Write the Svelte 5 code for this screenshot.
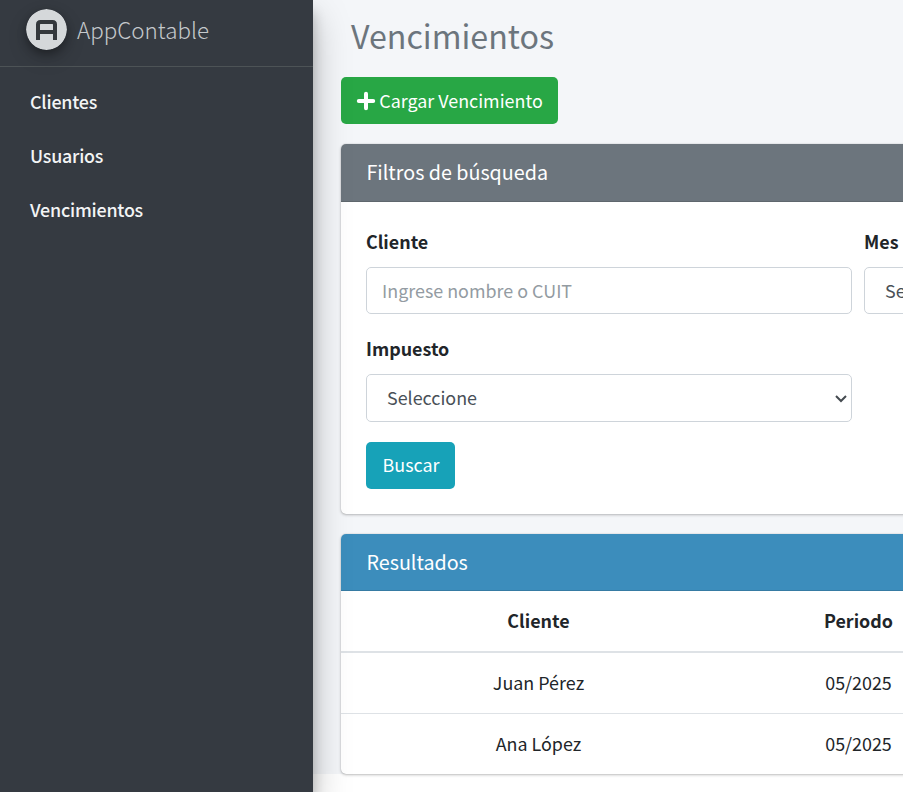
<script>
  const links = ['Clientes', 'Usuarios', 'Vencimientos'];
  const rows = [
    { cliente: 'Juan Pérez', periodo: '05/2025' },
    { cliente: 'Ana López', periodo: '05/2025' }
  ];
</script>

<div class="app">
  <aside class="sidebar">
    <a class="brand" href="#inicio">
      <svg class="logo" width="41" height="41" viewBox="0 0 41 41" aria-hidden="true">
        <circle cx="20.5" cy="20.5" r="20.4" fill="#d5d8da" />
        <path d="M12 31V15.500Q12 13 14.500 13H26.500Q29 13 29 15.500V31M12 23H29" fill="none" stroke="#34383c" stroke-width="4" />
      </svg>
      <span class="brand-text">AppContable</span>
    </a>
    <nav>
      {#each links as link}
        <a href="#{link}">{link}</a>
      {/each}
    </nav>
  </aside>

  <main>
    <h1>Vencimientos</h1>
    <button class="btn green" type="button">
      <svg width="20" height="20" viewBox="0 0 20 20" aria-hidden="true">
        <path d="M10 2.800V17.200M2.800 10H17.200" stroke="#fff" stroke-width="4" stroke-linecap="round" />
      </svg>
      <span>Cargar Vencimiento</span>
    </button>

    <section class="card filters">
      <h2>Filtros de búsqueda</h2>
      <form>
        <div class="grid">
          <div class="field">
            <label for="cliente">Cliente</label>
            <input id="cliente" type="text" placeholder="Ingrese nombre o CUIT" />
          </div>
          <div class="field">
            <label for="mes">Mes</label>
            <div class="select"><select id="mes"><option>Seleccione</option></select></div>
          </div>
          <div class="field">
            <label for="impuesto">Impuesto</label>
            <div class="select">
              <select id="impuesto"><option>Seleccione</option></select>
              <svg class="chevron" width="12" height="8" viewBox="0 0 12 8" aria-hidden="true">
                <path d="M1 1L6 6L11 1" fill="none" stroke="#454b50" stroke-width="2" />
              </svg>
            </div>
          </div>
        </div>
        <button class="btn teal" type="button">Buscar</button>
      </form>
    </section>

    <section class="card results">
      <h2>Resultados</h2>
      <table>
        <thead>
          <tr><th>Cliente</th><th>Periodo</th></tr>
        </thead>
        <tbody>
          {#each rows as row}
            <tr><td>{row.cliente}</td><td>{row.periodo}</td></tr>
          {/each}
        </tbody>
      </table>
    </section>
  </main>
</div>

<style>
  :global(body) { margin: 0; background: #fff; }
  .app {
    display: flex;
    width: 903px;
    height: 792px;
    overflow: hidden;
    font-family: 'Noto Sans CJK SC', 'Open Sans', sans-serif;
    font-size: 17.9px;
    line-height: 30px;
    color: #212529;
  }
  .app * { box-sizing: border-box; }
  .sidebar {
    position: relative;
    z-index: 1;
    flex: 0 0 313px;
    background: #353a41;
    box-shadow: 0 17px 35px rgba(0, 0, 0, 0.25), 0 12px 12px rgba(0, 0, 0, 0.22);
  }
  .brand {
    display: flex;
    align-items: center;
    gap: 10px;
    height: 67px;
    padding: 0 0 7px 26px;
    border-bottom: 1px solid #4d5356;
    text-decoration: none;
  }
  .logo {
    flex: none;
    border-radius: 50%;
    box-shadow: 0 4px 8px rgba(0, 0, 0, 0.3), 0 8px 20px rgba(0, 0, 0, 0.16);
  }
  .brand-text { padding-bottom: 2px; font-size: 22.4px; font-weight: 300; color: #c5c9cc; }
  nav { display: flex; flex-direction: column; gap: 24px; padding: 19px 0 0 30px; }
  nav a { font-weight: 500; letter-spacing: -0.22px; color: #f3f4f5; text-decoration: none; }
  main {
    flex: 0 0 1100px;
    height: 774px;
    padding-left: 28px;
    background: #f4f6f9;
  }
  h1 {
    margin: 0;
    padding: 12px 0 0 10px;
    height: 77px;
    font-size: 32.200px;
    line-height: 46px;
    font-weight: 400;
    color: #6c757d;
  }
  .btn {
    display: flex;
    align-items: center;
    justify-content: center;
    height: 47px;
    padding: 0;
    border: 0;
    border-radius: 5px;
    font: inherit;
    color: #fff;
    white-space: nowrap;
  }
  .green { width: 217px; gap: 3px; background: #28a745; }
  .green span { padding-bottom: 2px; }
  .teal { width: 89px; margin-top: 20px; padding: 0 0 3px 1px; background: #17a2b8; }
  .card {
    border-radius: 5px;
    background: #fff;
    box-shadow: 0 0 1px rgba(0, 0, 0, 0.25), 0 1px 3px rgba(0, 0, 0, 0.25);
    overflow: hidden;
  }
  .filters { margin-top: 20px; height: 370px; }
  .results { margin-top: 20px; height: 240px; }
  h2 {
    margin: 0;
    padding-left: 25.5px;
    font-size: 19.700px;
    line-height: 55px;
    font-weight: 400;
    color: #fff;
  }
  .filters h2 { height: 58px; background: #6c757d; border-bottom: 1px solid #5f676d; }
  .results h2 { height: 57px; background: #3c8dbc; border-bottom: 1px solid #367ba3; }
  form { padding: 25px; }
  .grid { display: grid; grid-template-columns: 486px 486px; gap: 20px 12px; }
  .field { display: flex; flex-direction: column; gap: 12px; }
  label { font-weight: 700; line-height: 28px; }
  input, select {
    display: block;
    width: 100%;
    height: 47px;
    padding: 0 15px 2px;
    border: 1px solid #ced4da;
    border-radius: 5px;
    background: #fff;
    font: inherit;
    color: #495057;
    outline: none;
    appearance: none;
  }
  select { padding-left: 20px; }
  #impuesto { height: 48px; }
  input::placeholder { color: #939ba2; opacity: 1; }
  .select { position: relative; }
  .chevron { position: absolute; right: 5px; top: 21px; }
  table { width: 639px; border-collapse: collapse; table-layout: fixed; }
  th, td { padding: 0 1px 2px 0; height: 61px; text-align: center; width: 396px; }
  th:last-child, td:last-child { width: 243px; padding-right: 0; }
  th { border-bottom: 2px solid #dee2e6; }
  td { border-top: 1px solid #dee2e6; }
</style>
